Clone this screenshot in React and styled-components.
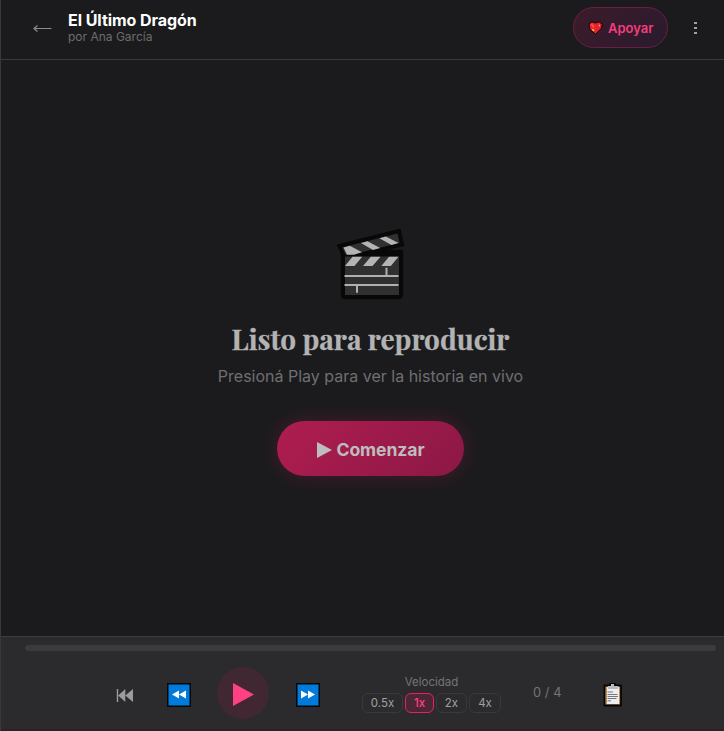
/**
 * Reproductor de historias
 */
import React, { useState } from "react";
import styled, { createGlobalStyle, css } from "styled-components";

const GlobalStyle = createGlobalStyle`
    * {
        box-sizing: border-box;
    }

    body {
        margin: 0;
        background: #1b1b1d;
        overflow: hidden;
    }

    button {
        font: inherit;
        padding: 0;
        border: 0;
        background: none;
        cursor: pointer;
    }

    svg {
        display: block;
        flex-shrink: 0;
    }
`;

const Player = styled.div`
    display: flex;
    flex-direction: column;
    height: 731px;
    border-left: 1px solid #38383b;
    background: #1b1b1d;
    color: #fff;
    font-family: Inter, sans-serif;
`;

/* Cabecera */
const Header = styled.header`
    display: flex;
    align-items: center;
    height: 60px;
    flex-shrink: 0;
    padding: 0 21px 4px 32px;
    border-bottom: 1px solid #3a3a3d;
`;

const BackButton = styled.button`
    width: 35px;
    height: 24px;
`;

const StoryInfo = styled.div`
    flex: 1;

    h1 {
        margin: 0;
        font-size: 16px;
        font-weight: 700;
        line-height: 18px;
        letter-spacing: -0.05px;
    }

    p {
        margin: 0;
        color: #6c6c6e;
        font-size: 12px;
        line-height: 15px;
    }
`;

const SupportButton = styled.button`
    display: flex;
    align-items: center;
    gap: 5px;
    width: 95px;
    height: 41px;
    padding-left: 14px;
    border: 1px solid #6a1e41;
    border-radius: 21px;
    background: linear-gradient(135deg, #3c1b29, #291b2f);
    color: #f43d7c;
    font-size: 13px;
    font-weight: 600;
`;

const MenuButton = styled.button`
    display: flex;
    flex-direction: column;
    align-items: center;
    gap: 3px;
    width: 16px;
    margin-left: 19px;

    i {
        width: 3px;
        height: 2px;
        background: #a0a0a2;
    }
`;

/* Escenario */
const Stage = styled.main`
    display: flex;
    flex: 1;
    flex-direction: column;
    align-items: center;
    padding: 168px 0 0 16px;

    h2 {
        margin: 19px 0 0;
        color: #b3b3b4;
        font-family: "Playfair Display", "Liberation Serif", serif;
        font-size: 28px;
        font-weight: 700;
        line-height: 40px;
        white-space: nowrap;
        -webkit-text-stroke: 0.3px #b3b3b4;
    }

    p {
        margin: 7px 0 0;
        color: #6f6f71;
        font-size: 16px;
        line-height: 20px;
    }
`;

const StartButton = styled.button`
    display: flex;
    align-items: center;
    justify-content: center;
    gap: 5px;
    width: 187px;
    height: 55px;
    margin-top: 35px;
    padding-top: 2px;
    border-radius: 28px;
    background: linear-gradient(135deg, #b01d50, #8b1845);
    box-shadow: 0 0 20px rgba(176, 29, 80, 0.3);
    color: #bdbdbe;
    font-size: 17.6px;
    font-weight: 700;
    letter-spacing: -0.1px;
`;

/* Controles */
const Footer = styled.footer`
    height: 95px;
    flex-shrink: 0;
    padding: 8px 8px 0 24px;
    border-top: 1px solid #3c3c3f;
    border-bottom: 2px solid #252527;
    background: #2b2b2d;
`;

const ProgressTrack = styled.div`
    height: 6px;
    border-radius: 3px;
    background: #3a3a3f;
`;

const Controls = styled.div`
    display: flex;
    align-items: center;
    height: 52px;
    margin-top: 16px;
    padding-left: 91px;
`;

const ControlButton = styled.button`
    display: flex;
    align-items: center;
    justify-content: center;
    height: 25px;
    width: ${({ $width }) => $width}px;
    margin: 4px ${({ $gap }) => $gap}px 0 0;
`;

const PlayButton = styled.button`
    width: 52px;
    height: 52px;
    margin-right: 27px;
    padding: 2px 0 0 16px;
    border-radius: 50%;
    background: #402731;
    color: #ff4081;
`;

const Speed = styled.div`
    width: 139px;
    margin: 2px 32px 0 42px;
    text-align: center;
`;

const SpeedLabel = styled.div`
    color: #747476;
    font-size: 11.5px;
    line-height: 15px;
    margin-bottom: 3px;
`;

const SpeedOptions = styled.div`
    display: flex;
    gap: 2px;
`;

const SpeedOption = styled.button`
    width: ${({ $width }) => $width}px;
    height: 20px;
    border: 1px solid #39393c;
    border-radius: 6px;
    color: #a0a0a2;
    font-size: 11.5px;
    line-height: 18px;

    ${({ $active }) =>
        $active &&
        css`
            border-color: #e91e63;
            background: #4b2636;
            color: #ff4081;
            font-weight: 500;
        `}
`;

const Counter = styled.span`
    width: 70px;
    margin-top: -2px;
    color: #747476;
    font-size: 12.8px;
    letter-spacing: 0.1px;
`;

const ArrowIcon = () => (
    <svg width="20" height="24" viewBox="0 0 20 24" fill="none" stroke="#8a8a8c" strokeWidth="1.2">
        <path d="M18.5 12.5H1M4.5 9.5L1 12.5L4.5 15.5" />
    </svg>
);

const HeartIcon = () => (
    <svg width="15" height="14" viewBox="0 0 15 14">
        <path d="M1 2.8L4 .8L7.5 2L11 .7L14.2 3L13.6 7.2L7.5 13.2L1.8 8.3Z" fill="#e9202d" stroke="#090607" strokeWidth="1" strokeLinejoin="round" />
        <path d="M2.5 3.3L4.2 2.4L6.5 5L5.2 7.5" fill="#ff4b45" />
        <path d="M3.5 8h2l1.3 2H5zM10.8 3.8h1.2v1.4h-1.2z" fill="#f7c52b" />
    </svg>
);

const ClapperIcon = () => (
    <svg width="68" height="72" viewBox="0 0 68 72">
        <path d="M6 24H64V66Q64 69 61 69H9Q6 69 6 66Z" fill="#303030" stroke="#080808" strokeWidth="4.5" strokeLinejoin="round" />
        <path d="M2.5 18L62 3L65 16.5L32 24.5L8 30Z" fill="#303030" stroke="#080808" strokeWidth="4" strokeLinejoin="miter" />
        <path d="M8 27V67H62V28H8Z" fill="#303030" />
        <path d="M8 28.5V27L32 24.5H62V28.5Z" fill="#080808" />
        <path d="M6.5 19.5L12.8 17.7L25 24.3L17 26.7H10ZM24 15L30.5 13.3L43.2 20L36 22ZM42.3 10.2L48.8 8.6L61.5 15L54.5 17Z" fill="#b4b4b4" />
        <path d="M15.5 28.7H25.2L17.5 38H8ZM33.8 28.7H43.5L35.5 38H26ZM52 28.7H61.5L53.8 38H44.3Z" fill="#b4b4b4" />
        <path d="M7.5 48H61.5M7.5 57H61.5M49.5 39.7V47M20 58V64.7" stroke="#b0b0b0" strokeWidth="2" />
    </svg>
);

const RestartIcon = () => (
    <svg width="18" height="15" viewBox="0 0 18 15" fill="#9b9b9d">
        <path d="M.8 1h1.4v13H.8zM9.3 1v13L2.2 7.5zM17 1v13L9.3 7.5z" />
    </svg>
);

const SkipIcon = ({ forward }) => (
    <svg width="24" height="24" viewBox="0 0 24 24">
        <rect x=".5" y=".5" width="23" height="23" rx="1" fill="#007bdc" stroke="#060708" strokeWidth="2" />
        <path d={forward ? "M5 7.5v8l7-4zM12 7.5v8l7-4z" : "M12 7.5v8l-7-4zM19 7.5v8l-7-4z"} fill="#fff" />
    </svg>
);

const PlayIcon = ({ width, height }) => (
    <svg width={width} height={height} viewBox="0 0 20 22" preserveAspectRatio="none">
        <path d="M0 0L20 11L0 22Z" fill="currentColor" />
    </svg>
);

const ClipboardIcon = () => (
    <svg width="20" height="24" viewBox="0 0 20 24">
        <path d="M1.5 2.5H7V1H12V2.5H18V22.5H1.5Z" fill="#c48a52" stroke="#050505" strokeWidth="1.8" strokeLinejoin="round" />
        <path d="M4 4h12v17H4z" fill="#eceeef" />
        <path d="M5 3h3V1h3v2h4v3H5z" fill="#b8babf" />
        <path d="M4.5 9h5.5M4.5 11.5h10M4.5 13.5h10.5M4.5 15.5h9M4.5 17.8h3.5" stroke="#74777b" strokeWidth="1" />
    </svg>
);

const speeds = [
    { value: "0.5x", width: 41 },
    { value: "1x", width: 29 },
    { value: "2x", width: 31 },
    { value: "4x", width: 32 },
];

const App = () => {
    const [speed, setSpeed] = useState("1x");

    return (
        <Player>
            <GlobalStyle />
            <Header>
                <BackButton aria-label="Volver"><ArrowIcon /></BackButton>
                <StoryInfo>
                    <h1>El Último Dragón</h1>
                    <p>por Ana García</p>
                </StoryInfo>
                <SupportButton><HeartIcon />Apoyar</SupportButton>
                <MenuButton aria-label="Menú"><i /><i /><i /></MenuButton>
            </Header>
            <Stage>
                <ClapperIcon />
                <h2>Listo para reproducir</h2>
                <p>Presioná Play para ver la historia en vivo</p>
                <StartButton><PlayIcon width={15} height={16} />Comenzar</StartButton>
            </Stage>
            <Footer>
                <ProgressTrack />
                <Controls>
                    <ControlButton $width={18} $gap={33} aria-label="Reiniciar"><RestartIcon /></ControlButton>
                    <ControlButton $width={24} $gap={26} aria-label="Retroceder"><SkipIcon /></ControlButton>
                    <PlayButton aria-label="Reproducir"><PlayIcon width={21} height={23} /></PlayButton>
                    <ControlButton $width={24} $gap={0} aria-label="Avanzar"><SkipIcon forward /></ControlButton>
                    <Speed>
                        <SpeedLabel>Velocidad</SpeedLabel>
                        <SpeedOptions>
                            {speeds.map(({ value, width }) => (
                                <SpeedOption key={value} $width={width} $active={speed === value} onClick={() => setSpeed(value)}>
                                    {value}
                                </SpeedOption>
                            ))}
                        </SpeedOptions>
                    </Speed>
                    <Counter>0 / 4</Counter>
                    <ControlButton $width={20} $gap={0} aria-label="Guion"><ClipboardIcon /></ControlButton>
                </Controls>
            </Footer>
        </Player>
    );
};

export default App;
